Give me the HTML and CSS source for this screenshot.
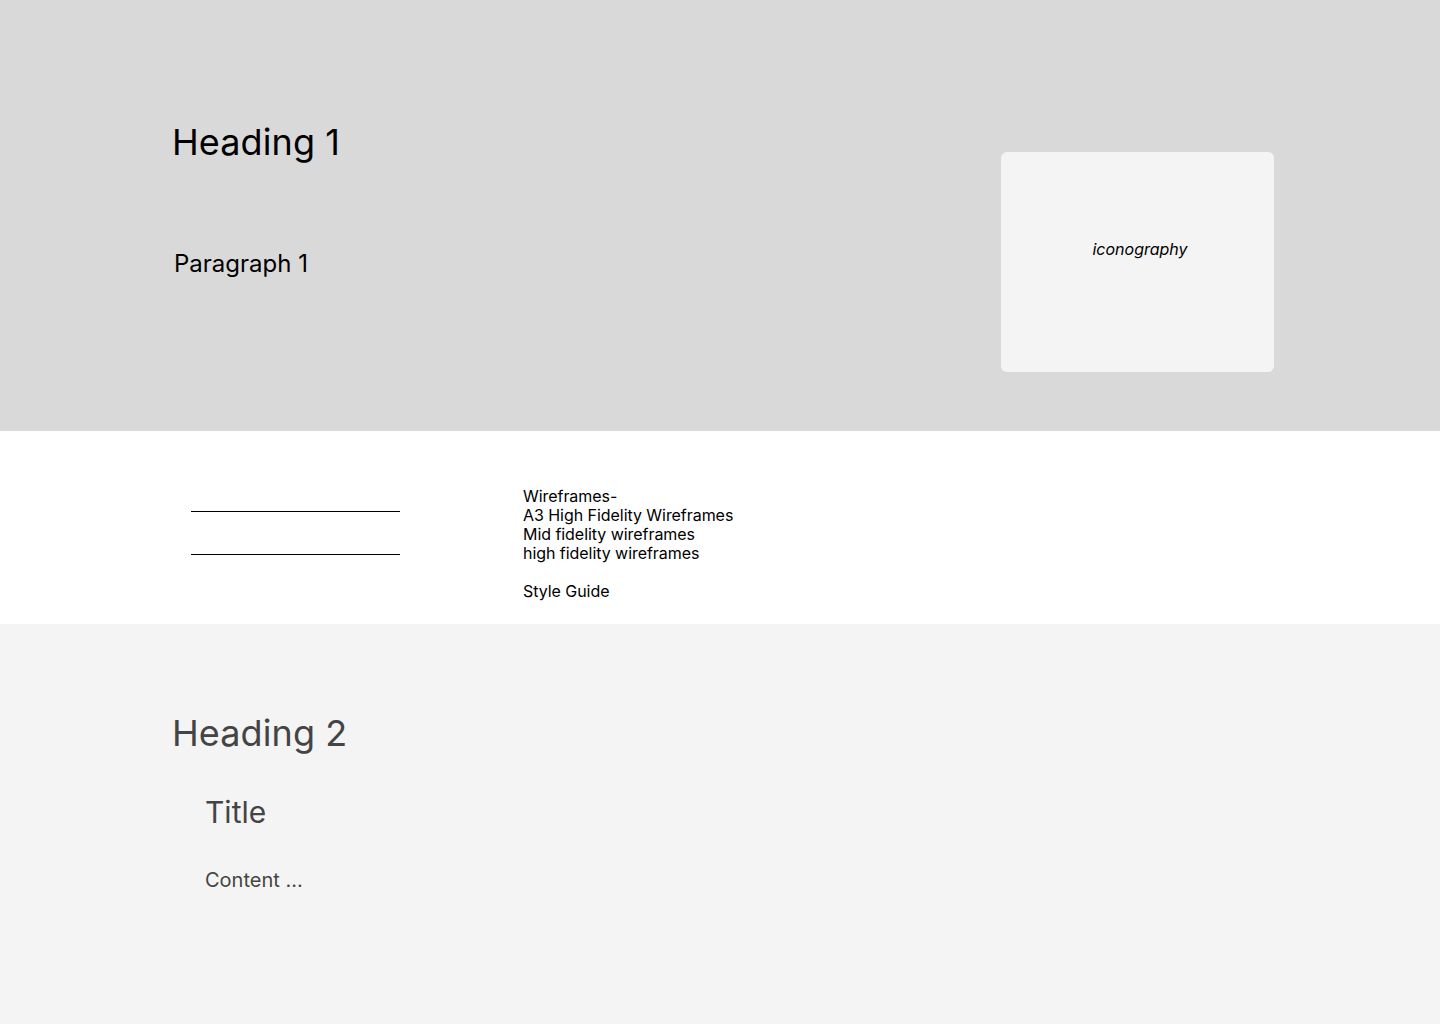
FILE: index.html
```html
<!DOCTYPE html>
<html lang="en">
<head>
<meta charset="utf-8">
<title>Style Guide</title>
<link rel="stylesheet" href="styles.css">
</head>
<body>
<section class="hero">
  <div class="hero-text">
    <h1 class="h1">Heading 1</h1>
    <p class="para">Paragraph 1</p>
  </div>
  <div class="icon-card">
    <span class="icon-label">iconography</span>
  </div>
</section>
<section class="nav-band">
  <div class="rules">
    <div class="rule"></div>
    <div class="rule"></div>
  </div>
  <div class="links">
    <div>Wireframes-</div>
    <div>A3 High Fidelity Wireframes</div>
    <div>Mid fidelity wireframes</div>
    <div>high fidelity wireframes</div>
    <div class="blank"></div>
    <div>Style Guide</div>
  </div>
</section>
<section class="content-band">
  <h2 class="h2">Heading 2</h2>
  <div class="block">
    <h3 class="title">Title</h3>
    <p class="content">Content ...</p>
  </div>
</section>
</body>
</html>
```
FILE: styles.css
```css
* { box-sizing: border-box; }
html, body { margin: 0; padding: 0; }
body {
  font-family: Inter, "Noto Sans", sans-serif;
  color: #000;
  background: #fff;
  width: 1440px;
  height: 1024px;
  overflow: hidden;
}
h1, h2, h3, p { margin: 0; font-weight: 400; }

.hero {
  height: 431px;
  background: #d9d9d9;
  display: flex;
  align-items: flex-start;
}
.hero-text {
  padding-left: 172px;
  padding-top: 120px;
}
.h1 {
  font-size: 36px;
  line-height: 44px;
  letter-spacing: 0.1px;
}
.para {
  margin-top: 85px;
  margin-left: 2px;
  font-size: 24px;
  line-height: 29px;
}
.icon-card {
  margin-left: auto;
  margin-right: 166px;
  margin-top: 152px;
  width: 273px;
  height: 220px;
  background: #f4f4f4;
  border-radius: 6px;
  display: flex;
  justify-content: center;
  padding-top: 88px;
  padding-left: 5px;
}
.icon-label {
  font-style: italic;
  font-size: 16px;
  line-height: 19px;
}

.nav-band {
  height: 193px;
  background: #fff;
  display: flex;
  align-items: flex-start;
}
.rules {
  margin-left: 191px;
  width: 209px;
  padding-top: 80px;
  display: flex;
  flex-direction: column;
  gap: 42px;
}
.rule {
  height: 1px;
  background: #000;
}
.links {
  margin-left: 123px;
  padding-top: 56px;
  font-size: 16px;
  line-height: 19px;
  letter-spacing: -0.05px;
}
.blank { height: 19px; }

.content-band {
  height: 400px;
  background: #f4f4f4;
  padding-left: 172px;
  padding-top: 87px;
  color: #444;
}
.h2 {
  font-size: 36px;
  line-height: 44px;
  letter-spacing: 0.1px;
}
.block {
  padding-left: 33px;
  padding-top: 39px;
}
.title {
  font-size: 30px;
  line-height: 36px;
}
.content {
  margin-top: 38px;
  font-size: 20px;
  line-height: 24px;
}
```
